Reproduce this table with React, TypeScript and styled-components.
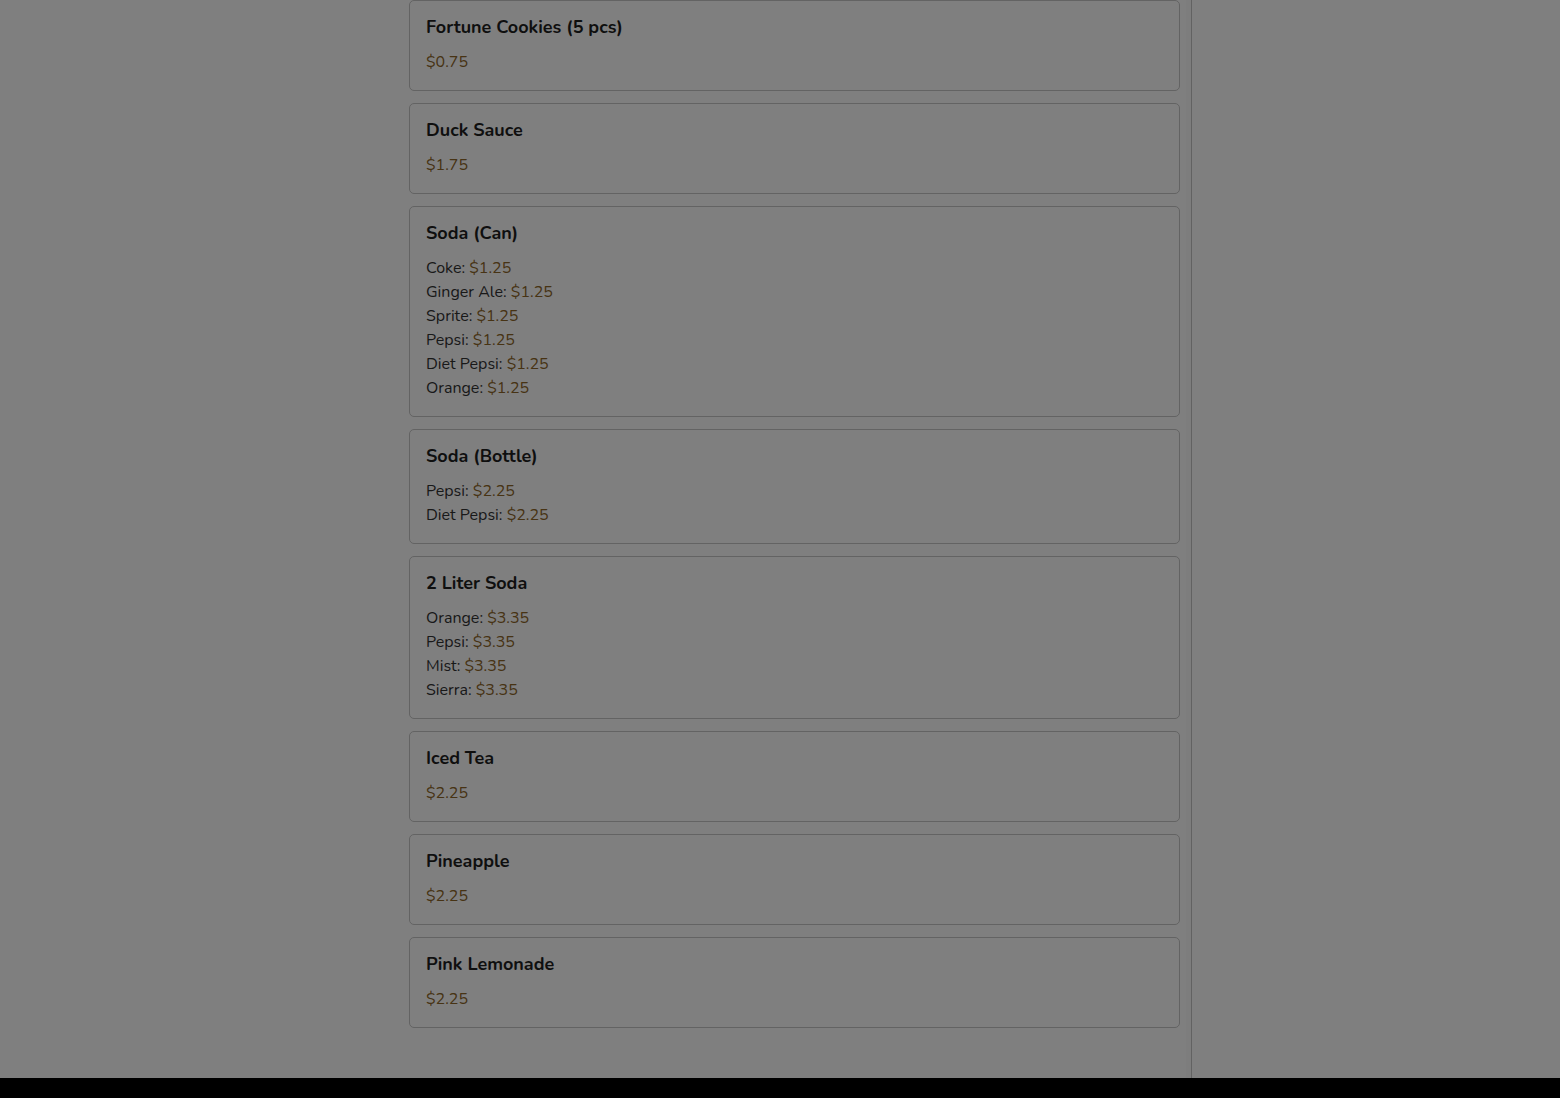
import React from "react";
import styled, { createGlobalStyle } from "styled-components";

const GlobalStyle = createGlobalStyle`
  html, body {
    margin: 0;
    padding: 0;
    background: #fff;
    font-family: "Nunito", "Lato", "Noto Sans", sans-serif;
  }
`;

type Variant = { name: string; price: string };
type MenuItem = { name: string; price?: string; variants?: Variant[] };

const items: MenuItem[] = [
  { name: "Fortune Cookies (5 pcs)", price: "$0.75" },
  { name: "Duck Sauce", price: "$1.75" },
  {
    name: "Soda (Can)",
    variants: [
      { name: "Coke", price: "$1.25" },
      { name: "Ginger Ale", price: "$1.25" },
      { name: "Sprite", price: "$1.25" },
      { name: "Pepsi", price: "$1.25" },
      { name: "Diet Pepsi", price: "$1.25" },
      { name: "Orange", price: "$1.25" },
    ],
  },
  {
    name: "Soda (Bottle)",
    variants: [
      { name: "Pepsi", price: "$2.25" },
      { name: "Diet Pepsi", price: "$2.25" },
    ],
  },
  {
    name: "2 Liter Soda",
    variants: [
      { name: "Orange", price: "$3.35" },
      { name: "Pepsi", price: "$3.35" },
      { name: "Mist", price: "$3.35" },
      { name: "Sierra", price: "$3.35" },
    ],
  },
  { name: "Iced Tea", price: "$2.25" },
  { name: "Pineapple", price: "$2.25" },
  { name: "Pink Lemonade", price: "$2.25" },
];

const Page = styled.div`
  display: flex;
  flex-direction: column;
  height: 1098px;
  overflow: hidden;
`;

const Body = styled.div`
  flex: 1;
  display: flex;
  min-height: 0;
`;

const Column = styled.section`
  box-sizing: border-box;
  width: 800px;
  margin-left: 392px;
  padding: 0 11px 50px 17px;
  border-right: 1px solid #c4c4c4;
  box-shadow: inset -5px 0 0 #fafafa;
  display: flex;
  flex-direction: column;
  gap: 12px;
  overflow: hidden;
`;

const Card = styled.article`
  border: 1px solid #c6c6c6;
  border-radius: 5px;
  padding: 16px;
  background: #fff;
`;

const Title = styled.h3`
  margin: 0 0 12px;
  font-size: 18px;
  line-height: 21px;
  font-weight: 700;
  color: #1e1e1e;
`;

const Line = styled.div`
  font-size: 16px;
  line-height: 24px;
  color: #333;
`;

const Price = styled.span`
  color: #8e6628;
`;

const Footer = styled.div`
  height: 20px;
  background: #000;
`;

const Overlay = styled.div`
  position: fixed;
  inset: 0;
  background: rgba(0, 0, 0, 0.5);
`;

export default function App() {
  return (
    <>
      <GlobalStyle />
      <Page>
        <Body>
          <Column>
            {items.map((item) => (
              <Card key={item.name}>
                <Title>{item.name}</Title>
                {item.price && (
                  <Line>
                    <Price>{item.price}</Price>
                  </Line>
                )}
                {item.variants?.map((v) => (
                  <Line key={v.name}>
                    {v.name}: <Price>{v.price}</Price>
                  </Line>
                ))}
              </Card>
            ))}
          </Column>
        </Body>
        <Footer />
      </Page>
      <Overlay />
    </>
  );
}
